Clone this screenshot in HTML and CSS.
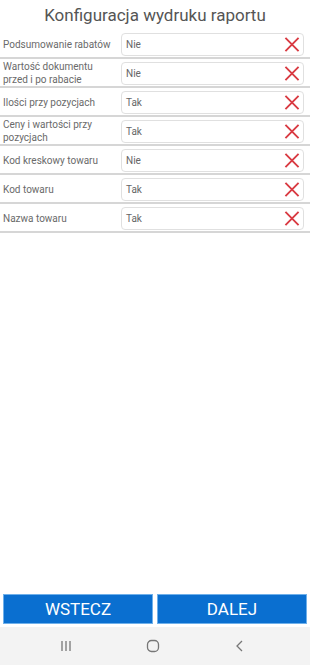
FILE: index.html
```html
<!DOCTYPE html>
<html lang="pl">
<head>
<meta charset="utf-8">
<link rel="stylesheet" href="styles.css">
</head>
<body>
<div class="screen">
  <h1 class="title">Konfiguracja wydruku raportu</h1>
  <div class="list">
    <div class="row"><div class="label">Podsumowanie rabatów</div><div class="field"><span class="value">Nie</span><svg class="clear" viewBox="0 0 16 16"><path d="M1 1L15 15M15 1L1 15"/></svg></div></div>
    <div class="row"><div class="label">Wartość dokumentu przed i po rabacie</div><div class="field"><span class="value">Nie</span><svg class="clear" viewBox="0 0 16 16"><path d="M1 1L15 15M15 1L1 15"/></svg></div></div>
    <div class="row"><div class="label">Ilości przy pozycjach</div><div class="field"><span class="value">Tak</span><svg class="clear" viewBox="0 0 16 16"><path d="M1 1L15 15M15 1L1 15"/></svg></div></div>
    <div class="row"><div class="label">Ceny i wartości przy pozycjach</div><div class="field"><span class="value">Tak</span><svg class="clear" viewBox="0 0 16 16"><path d="M1 1L15 15M15 1L1 15"/></svg></div></div>
    <div class="row"><div class="label">Kod kreskowy towaru</div><div class="field"><span class="value">Nie</span><svg class="clear" viewBox="0 0 16 16"><path d="M1 1L15 15M15 1L1 15"/></svg></div></div>
    <div class="row"><div class="label">Kod towaru</div><div class="field"><span class="value">Tak</span><svg class="clear" viewBox="0 0 16 16"><path d="M1 1L15 15M15 1L1 15"/></svg></div></div>
    <div class="row"><div class="label">Nazwa towaru</div><div class="field"><span class="value">Tak</span><svg class="clear" viewBox="0 0 16 16"><path d="M1 1L15 15M15 1L1 15"/></svg></div></div>
  </div>
  <div class="spacer"></div>
  <div class="buttons">
    <button class="btn">WSTECZ</button>
    <button class="btn">DALEJ</button>
  </div>
  <div class="navbar">
    <svg class="nav-icon" viewBox="0 0 14 14"><path d="M3 2V12M7 2V12M11 2V12"/></svg>
    <svg class="nav-icon" viewBox="0 0 14 14"><rect x="1.5" y="1.5" width="11" height="11" rx="4"/></svg>
    <svg class="nav-icon" viewBox="0 0 14 14"><path d="M9 2L4 7L9 12"/></svg>
  </div>
</div>
</body>
</html>
```
FILE: styles.css
```css
* { box-sizing: border-box; }
html, body { margin: 0; padding: 0; background: #fff; }
body { font-family: Roboto, "Noto Sans", sans-serif; }
.screen {
  width: 310px;
  height: 665px;
  display: flex;
  flex-direction: column;
}
.title {
  margin: 0;
  height: 30px;
  font-size: 17px;
  font-weight: 400;
  color: #555;
  text-align: center;
  line-height: 30px;
}
.list { display: flex; flex-direction: column; }
.row {
  display: flex;
  align-items: center;
  height: 29px;
  padding: 2px 6px 1px 3px;
  border-bottom: 2px solid #d6d6d6;
}
.label {
  width: 118px;
  flex: none;
  font-size: 10px;
  line-height: 13px;
  color: #6a6a6a;
  padding-right: 4px;
}
.field {
  flex: 1;
  height: 23px;
  display: flex;
  align-items: center;
  justify-content: space-between;
  border: 1px solid #e0e0e0;
  border-radius: 4px;
  padding: 0 3px 0 4px;
}
.value { font-size: 10px; color: #666; }
.clear {
  width: 16px;
  height: 15px;
  fill: none;
  stroke: #d93a42;
  stroke-width: 2;
}
.spacer { flex: 1; }
.buttons {
  display: flex;
  gap: 4px;
  padding: 0 3px;
  margin-bottom: 3px;
}
.btn {
  flex: 1;
  height: 30px;
  border: 1px solid #6fb0ea;
  background: #0a6fd0;
  color: #fff;
  font-family: Roboto, sans-serif;
  font-size: 17px;
  padding: 0;
}
.navbar {
  height: 38px;
  background: #f3f3f3;
  display: flex;
  justify-content: center;
  gap: 73px;
  align-items: center;
  padding-right: 4px;
}
.nav-icon {
  width: 14px;
  height: 14px;
  fill: none;
  stroke: #777;
  stroke-width: 1.3;
}
```
